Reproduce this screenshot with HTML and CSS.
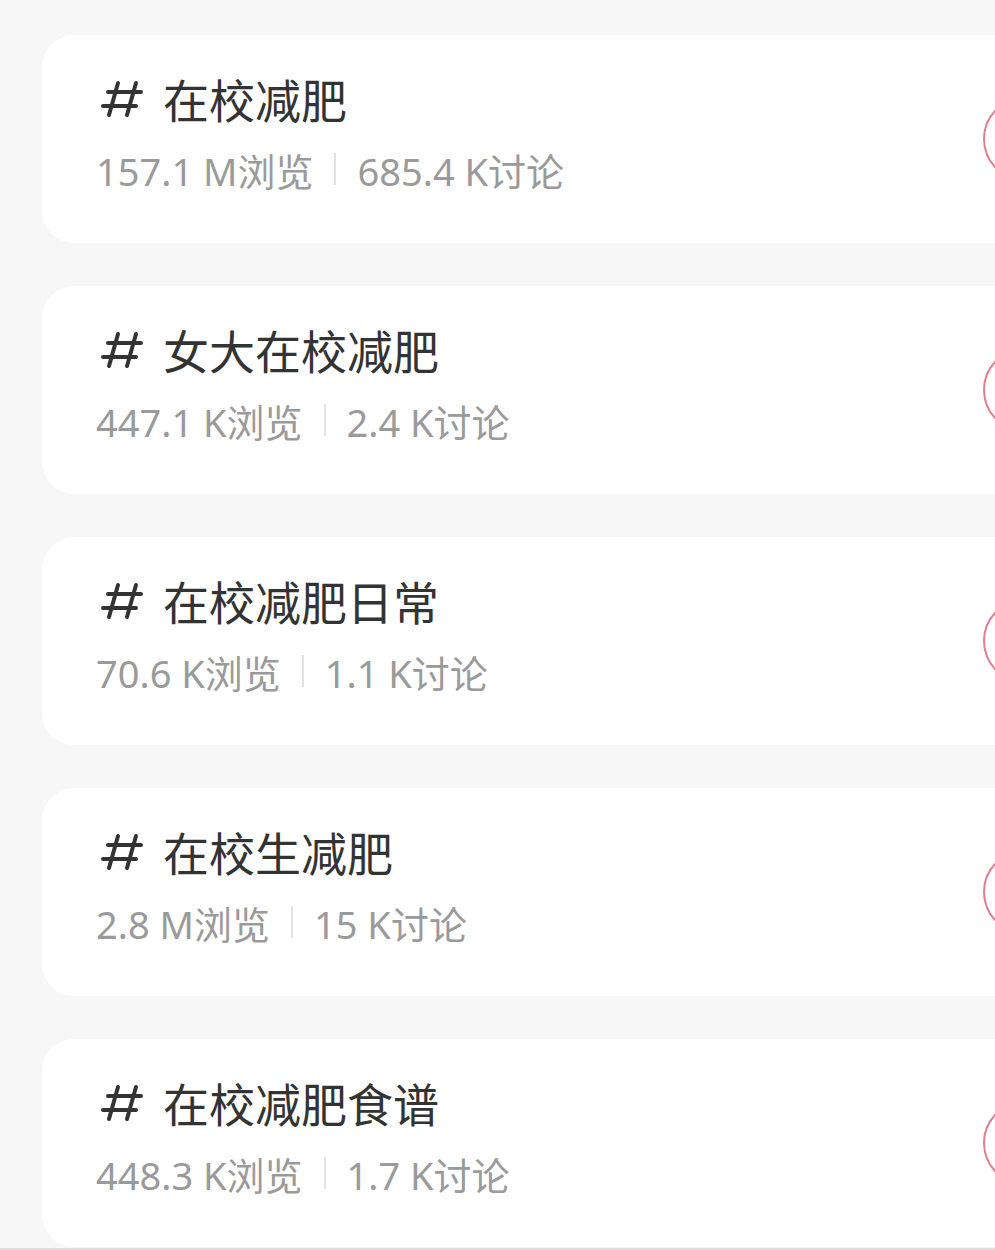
FILE: index.html
```html
<!DOCTYPE html>
<html>
<head>
    <title>话题</title>
    <link rel="stylesheet" href="styles.css">
</head>
<body>
    <div class="topic-list">
        <div class="topic">
            <div class="topic-info">
                <div class="topic-title">
                    <svg class="hash" width="44" height="40" viewBox="0 0 44 40"><path d="M18 5 L9 37 M36 5 L27 37 M8 14 H41 M3 28 H36" stroke="#333" stroke-width="4" stroke-linecap="round" fill="none"/></svg>
                    <span>在校减肥</span>
                </div>
                <div class="topic-stats">
                    <span>157.1 M浏览</span><i class="sep"></i><span>685.4 K讨论</span>
                </div>
            </div>
            <div class="join-btn"></div>
        </div>
        <div class="topic">
            <div class="topic-info">
                <div class="topic-title">
                    <svg class="hash" width="44" height="40" viewBox="0 0 44 40"><path d="M18 5 L9 37 M36 5 L27 37 M8 14 H41 M3 28 H36" stroke="#333" stroke-width="4" stroke-linecap="round" fill="none"/></svg>
                    <span>女大在校减肥</span>
                </div>
                <div class="topic-stats">
                    <span>447.1 K浏览</span><i class="sep"></i><span>2.4 K讨论</span>
                </div>
            </div>
            <div class="join-btn"></div>
        </div>
        <div class="topic">
            <div class="topic-info">
                <div class="topic-title">
                    <svg class="hash" width="44" height="40" viewBox="0 0 44 40"><path d="M18 5 L9 37 M36 5 L27 37 M8 14 H41 M3 28 H36" stroke="#333" stroke-width="4" stroke-linecap="round" fill="none"/></svg>
                    <span>在校减肥日常</span>
                </div>
                <div class="topic-stats">
                    <span>70.6 K浏览</span><i class="sep"></i><span>1.1 K讨论</span>
                </div>
            </div>
            <div class="join-btn"></div>
        </div>
        <div class="topic">
            <div class="topic-info">
                <div class="topic-title">
                    <svg class="hash" width="44" height="40" viewBox="0 0 44 40"><path d="M18 5 L9 37 M36 5 L27 37 M8 14 H41 M3 28 H36" stroke="#333" stroke-width="4" stroke-linecap="round" fill="none"/></svg>
                    <span>在校生减肥</span>
                </div>
                <div class="topic-stats">
                    <span>2.8 M浏览</span><i class="sep"></i><span>15 K讨论</span>
                </div>
            </div>
            <div class="join-btn"></div>
        </div>
        <div class="topic">
            <div class="topic-info">
                <div class="topic-title">
                    <svg class="hash" width="44" height="40" viewBox="0 0 44 40"><path d="M18 5 L9 37 M36 5 L27 37 M8 14 H41 M3 28 H36" stroke="#333" stroke-width="4" stroke-linecap="round" fill="none"/></svg>
                    <span>在校减肥食谱</span>
                </div>
                <div class="topic-stats">
                    <span>448.3 K浏览</span><i class="sep"></i><span>1.7 K讨论</span>
                </div>
            </div>
            <div class="join-btn"></div>
        </div>
    </div>
</body>
</html>
```

FILE: styles.css
```css
html, body {
    overflow: hidden;
}
body {
    margin: 0;
    height: 1250px;
    background-color: #f7f7f7;
    font-family: "Noto Sans", "Noto Sans CJK SC", sans-serif;
    box-sizing: border-box;
    border-bottom: 2px solid #dedede;
}
.topic-list {
    display: flex;
    flex-direction: column;
    gap: 43px;
    padding: 35px 0 0 42px;
}
.topic {
    display: flex;
    align-items: center;
    width: 1130px;
    height: 208px;
    box-sizing: border-box;
    padding: 0 49px 0 54px;
    background: #ffffff;
    border-radius: 32px;
}
.topic-info {
    flex: 1;
    padding-bottom: 16px;
}
.topic-title {
    display: flex;
    align-items: center;
    gap: 19px;
    height: 60px;
    font-size: 46px;
    color: #333333;
}
.hash {
    flex-shrink: 0;
    margin-left: 4px;
}
.topic-stats {
    display: flex;
    align-items: center;
    margin-top: 16px;
    height: 50px;
    font-size: 38px;
    color: #9a9a9a;
}
.sep {
    width: 2px;
    height: 32px;
    margin: 0 21px;
    background-color: #e2e2e2;
}
.join-btn {
    width: 140px;
    height: 84px;
    box-sizing: border-box;
    border: 2px solid #e27d8f;
    border-radius: 42px;
    flex-shrink: 0;
}
```
